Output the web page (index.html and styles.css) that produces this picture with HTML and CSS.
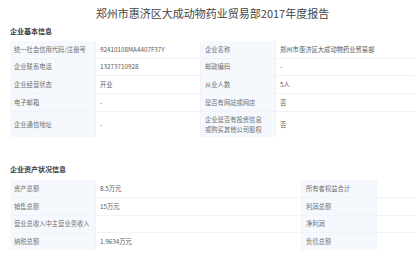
FILE: index.html
```html
<!DOCTYPE html>
<html lang="zh-CN">
<head>
<meta charset="utf-8">
<title>年度报告</title>
<link rel="stylesheet" href="styles.css">
</head>
<body>
<div class="page">
  <h1 class="title">郑州市惠济区大成动物药业贸易部2017年度报告</h1>

  <section class="sec sec-basic">
    <h2 class="sec-title">企业基本信息</h2>
    <div class="grid grid-basic">
      <div class="cell label">统一社会信用代码/注册号</div>
      <div class="cell value">92410108MA4407F37Y</div>
      <div class="cell label">企业名称</div>
      <div class="cell value">郑州市惠济区大成动物药业贸易部</div>

      <div class="cell label">企业联系电话</div>
      <div class="cell value">13273710928</div>
      <div class="cell label">邮政编码</div>
      <div class="cell value">-</div>

      <div class="cell label">企业经营状态</div>
      <div class="cell value">开业</div>
      <div class="cell label">从业人数</div>
      <div class="cell value">5人</div>

      <div class="cell label">电子邮箱</div>
      <div class="cell value">-</div>
      <div class="cell label">是否有网站或网店</div>
      <div class="cell value">否</div>

      <div class="cell label">企业通信地址</div>
      <div class="cell value">-</div>
      <div class="cell label">企业是否有投资信息<br>或购买其他公司股权</div>
      <div class="cell value">否</div>
    </div>
  </section>

  <section class="sec sec-assets">
    <h2 class="sec-title">企业资产状况信息</h2>
    <div class="grid grid-assets">
      <div class="cell label">资产总额</div>
      <div class="cell value">8.5万元</div>
      <div class="cell label">所有者权益合计</div>
      <div class="cell value"></div>

      <div class="cell label">销售总额</div>
      <div class="cell value">15万元</div>
      <div class="cell label">利润总额</div>
      <div class="cell value"></div>

      <div class="cell label">营业总收入中主营业务收入</div>
      <div class="cell value"></div>
      <div class="cell label">净利润</div>
      <div class="cell value"></div>

      <div class="cell label">纳税总额</div>
      <div class="cell value">1.9634万元</div>
      <div class="cell label">负债总额</div>
      <div class="cell value"></div>
    </div>
  </section>
</div>
</body>
</html>
```

FILE: styles.css
```css
html, body {
  margin: 0;
  padding: 0;
  background: #ffffff;
}

body {
  font-family: "Noto Sans CJK SC", "Noto Sans", sans-serif;
  color: #555;
}

.page {
  padding: 6px 4px 0 10px;
}

.title {
  margin: 0;
  font-size: 11px;
  line-height: 14px;
  height: 14px;
  font-weight: normal;
  color: #454545;
  text-align: center;
  white-space: nowrap;
}

.sec-title {
  margin: 0;
  font-size: 7px;
  line-height: 10px;
  height: 10px;
  font-weight: bold;
  color: #3a3a3a;
}

.sec-basic {
  padding-top: 6px;
}

.sec-basic .sec-title {
  margin-bottom: 5px;
}

.sec-assets {
  padding-top: 27px;
}

.sec-assets .sec-title {
  margin-bottom: 5.3px;
}

.grid {
  display: grid;
  gap: 1px;
  background: #f0f4f9;
}

.grid-basic {
  grid-template-columns: 85px 104px 74px 1fr;
  grid-template-rows: 16.6px 16.8px 16.8px 16.6px 25.6px;
}

.grid-assets {
  grid-template-columns: 85px 205px 74px 1fr;
  grid-template-rows: 17.4px 16.6px 16.6px 16.6px;
}

.cell {
  display: flex;
  align-items: center;
  padding: 0 4px;
  font-size: 6.3px;
  line-height: 9.5px;
  white-space: nowrap;
  overflow: hidden;
}

.label {
  background: #f5f9fe;
  color: #707070;
}

.value {
  background: #ffffff;
  color: #585858;
}
```
